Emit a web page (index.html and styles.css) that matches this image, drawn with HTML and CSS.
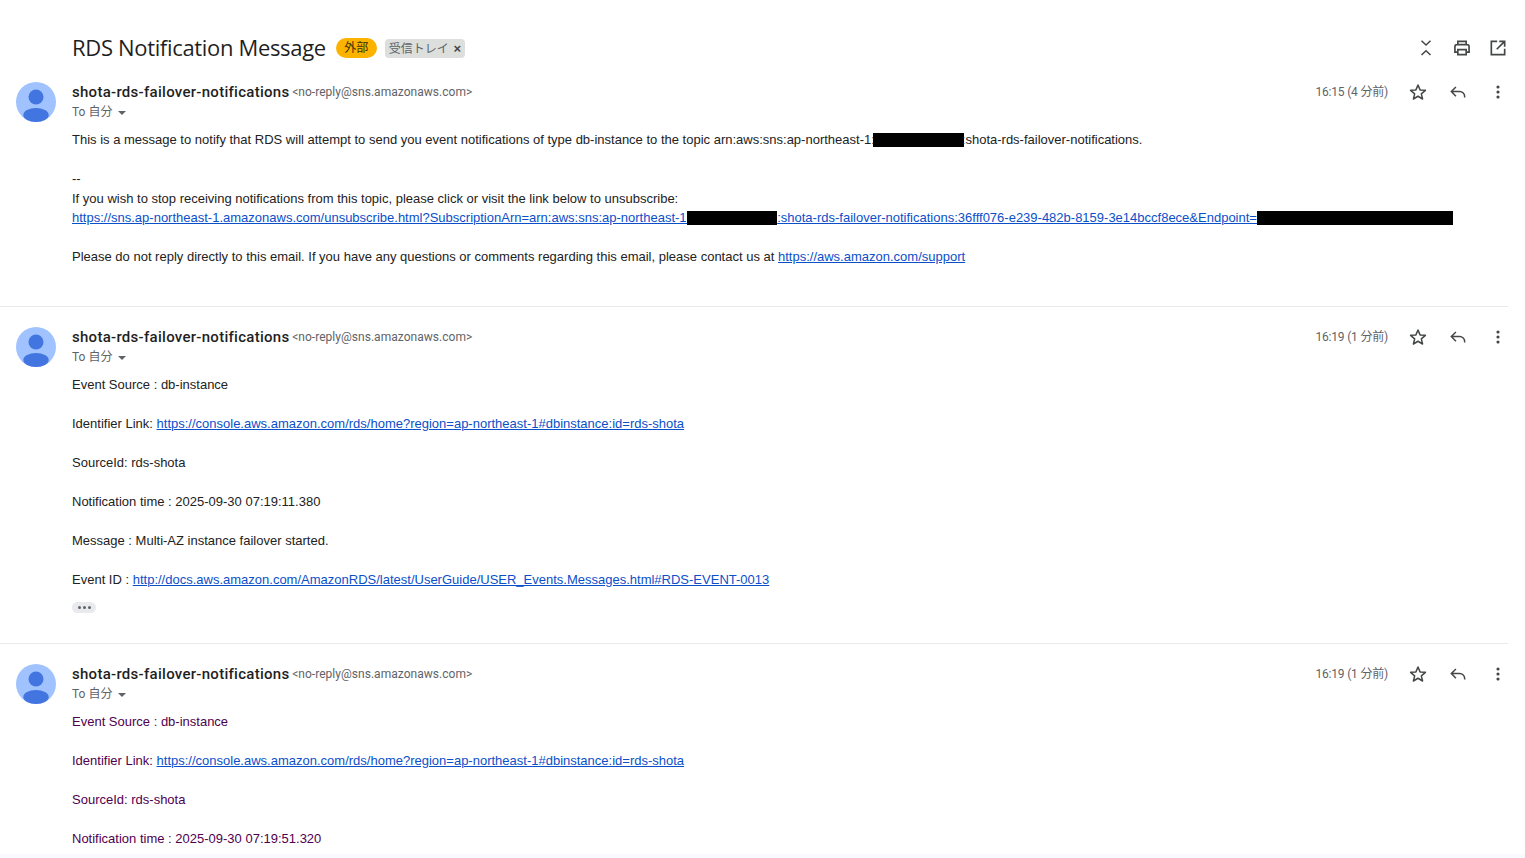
FILE: index.html
```html
<!DOCTYPE html>
<html lang="en">
<head>
  <meta charset="UTF-8">
  <meta name="viewport" content="width=device-width, initial-scale=1.0">
  <title>RDS Notification Message</title>
  <link rel="stylesheet" href="styles.css">
</head>
<body>
<svg class="icon-defs" width="0" height="0">
  <symbol id="i-avatar" viewBox="0 0 40 40">
    <circle cx="20" cy="20" r="20" fill="#a0c3ff"/>
    <circle cx="20" cy="15" r="7.500" fill="#4375e0"/>
    <ellipse cx="20" cy="33" rx="12.700" ry="7" fill="#4375e0"/>
  </symbol>
  <symbol id="i-star" viewBox="0 0 24 24">
    <path d="M12 3.600l2.500 5.900 6.400.5-4.900 4.200 1.500 6.200-5.500-3.300-5.500 3.300 1.500-6.200-4.900-4.200 6.400-.5z" fill="none" stroke="currentColor" stroke-width="1.800" stroke-linejoin="round"/>
  </symbol>
  <symbol id="i-reply" viewBox="0 0 24 24">
    <path d="M9.500 6L4 11.500 9.500 17M4.500 11.500H14a6 6 0 0 1 6 6v1" fill="none" stroke="currentColor" stroke-width="1.800"/>
  </symbol>
  <symbol id="i-more" viewBox="0 0 24 24">
    <circle cx="12" cy="6" r="1.900" fill="currentColor"/>
    <circle cx="12" cy="12" r="1.900" fill="currentColor"/>
    <circle cx="12" cy="18" r="1.900" fill="currentColor"/>
  </symbol>
</svg>

<div id="thread">
  <div class="subject-row">
    <h1 class="subject">RDS Notification Message</h1>
    <span class="tag-external">外部</span>
    <span class="tag-inbox">受信トレイ <span class="tag-x">×</span></span>
    <div class="subject-actions">
      <svg class="act" viewBox="0 0 24 24"><path d="M6.600 3.200L12 8.400l5.400-5.200M6.600 20.400L12 15.200l5.400 5.200" fill="none" stroke="currentColor" stroke-width="1.800"/></svg>
      <svg class="act" viewBox="0 0 24 24"><path d="M7 8V4h10v4M7 17H3.500v-6.500A2.500 2.500 0 0 1 6 8h12a2.500 2.500 0 0 1 2.500 2.500V17H17M7 14h10v6H7z" fill="none" stroke="currentColor" stroke-width="2"/></svg>
      <svg class="act" viewBox="0 0 24 24"><path d="M11 4H4v16h16v-7M13.500 4H20v6.500M20 4l-9.500 9.500" fill="none" stroke="currentColor" stroke-width="2"/></svg>
    </div>
  </div>

  <div class="message first">
    <svg class="avatar"><use href="#i-avatar"/></svg>
    <div class="message-main">
      <div class="message-head">
        <div>
          <div class="from"><strong>shota-rds-failover-notifications</strong> <span class="addr">&lt;no-reply@sns.amazonaws.com&gt;</span></div>
          <div class="to">To 自分 <span class="caret"></span></div>
        </div>
        <div class="head-right">
          <span class="time">16:15 (4 分前)</span>
          <svg class="act"><use href="#i-star"/></svg>
          <svg class="act"><use href="#i-reply"/></svg>
          <svg class="act"><use href="#i-more"/></svg>
        </div>
      </div>
      <div class="body">
        <p>This is a message to notify that RDS will attempt to send you event notifications of type db-instance to the topic arn:aws:sns:ap-northeast-1:<span class="redact r-91"></span>:shota-rds-failover-notifications.</p>
        <p class="blank"></p>
        <p>--</p>
        <p>If you wish to stop receiving notifications from this topic, please click or visit the link below to unsubscribe:</p>
        <p class="nowrap"><a href="#">https://sns.ap-northeast-1.amazonaws.com/unsubscribe.html?SubscriptionArn=arn:aws:sns:ap-northeast-1:<span class="redact r-90"></span>:shota-rds-failover-notifications:36fff076-e239-482b-8159-3e14bccf8ece&amp;Endpoint=<span class="redact r-196"></span></a></p>
        <p class="blank"></p>
        <p>Please do not reply directly to this email. If you have any questions or comments regarding this email, please contact us at <a href="#">https://aws.amazon.com/support</a></p>
      </div>
    </div>
  </div>

  <div class="message second">
    <svg class="avatar"><use href="#i-avatar"/></svg>
    <div class="message-main">
      <div class="message-head">
        <div>
          <div class="from"><strong>shota-rds-failover-notifications</strong> <span class="addr">&lt;no-reply@sns.amazonaws.com&gt;</span></div>
          <div class="to">To 自分 <span class="caret"></span></div>
        </div>
        <div class="head-right">
          <span class="time">16:19 (1 分前)</span>
          <svg class="act"><use href="#i-star"/></svg>
          <svg class="act"><use href="#i-reply"/></svg>
          <svg class="act"><use href="#i-more"/></svg>
        </div>
      </div>
      <div class="body">
        <p>Event Source : db-instance</p>
        <p class="blank"></p>
        <p>Identifier Link: <a href="#">https://console.aws.amazon.com/rds/home?region=ap-northeast-1#dbinstance:id=rds-shota</a></p>
        <p class="blank"></p>
        <p>SourceId: rds-shota</p>
        <p class="blank"></p>
        <p>Notification time : 2025-09-30 07:19:11.380</p>
        <p class="blank"></p>
        <p>Message : Multi-AZ instance failover started.</p>
        <p class="blank"></p>
        <p>Event ID : <a href="#">http://docs.aws.amazon.com/AmazonRDS/latest/UserGuide/USER_Events.Messages.html#RDS-EVENT-0013</a></p>
      </div>
      <div class="trimmed"><i></i><i></i><i></i></div>
    </div>
  </div>

  <div class="message last">
    <svg class="avatar"><use href="#i-avatar"/></svg>
    <div class="message-main">
      <div class="message-head">
        <div>
          <div class="from"><strong>shota-rds-failover-notifications</strong> <span class="addr">&lt;no-reply@sns.amazonaws.com&gt;</span></div>
          <div class="to">To 自分 <span class="caret"></span></div>
        </div>
        <div class="head-right">
          <span class="time">16:19 (1 分前)</span>
          <svg class="act"><use href="#i-star"/></svg>
          <svg class="act"><use href="#i-reply"/></svg>
          <svg class="act"><use href="#i-more"/></svg>
        </div>
      </div>
      <div class="body visited">
        <p>Event Source : db-instance</p>
        <p class="blank"></p>
        <p>Identifier Link: <a href="#">https://console.aws.amazon.com/rds/home?region=ap-northeast-1#dbinstance:id=rds-shota</a></p>
        <p class="blank"></p>
        <p>SourceId: rds-shota</p>
        <p class="blank"></p>
        <p>Notification time : 2025-09-30 07:19:51.320</p>
      </div>
    </div>
  </div>
</div>
<div class="bottom-strip"></div>
</body>
</html>
```

FILE: styles.css
```css
html, body {
  margin: 0;
  padding: 0;
  height: 858px;
  overflow: hidden;
  background-color: #ffffff;
  font-family: "Liberation Sans", Arial, "Noto Sans CJK JP", sans-serif;
  color: #222222;
}

.icon-defs {
  position: absolute;
}

#thread {
  height: 854px;
  overflow: hidden;
  padding-right: 17px;
}

.subject-row {
  display: flex;
  align-items: center;
  height: 48px;
  padding: 24px 0 10px 72px;
}

.subject {
  margin: 0 0 2px;
  font-family: "Open Sans", "Noto Sans CJK JP", sans-serif;
  font-size: 22px;
  font-weight: 400;
  color: #1f1f1f;
  letter-spacing: -0.33px;
}

.tag-external {
  margin-left: 10px;
  width: 41px;
  text-align: center;
  height: 20px;
  line-height: 18px;
  border-radius: 10px;
  background-color: #fbb300;
  font-size: 12px;
  font-family: "Noto Sans CJK JP", sans-serif;
  color: #3c2f00;
}

.tag-inbox {
  margin-left: 8px;
  padding: 0 4px;
  height: 19px;
  line-height: 17px;
  border-radius: 4px;
  background-color: #dddfdd;
  font-size: 12px;
  font-family: "Noto Sans CJK JP", sans-serif;
  color: #5f6368;
  white-space: nowrap;
}

.tag-x {
  margin-left: 2px;
  color: #444746;
  font-family: "Liberation Sans", sans-serif;
  font-size: 13px;
  font-weight: bold;
}

.subject-actions {
  margin-left: auto;
  display: flex;
  gap: 16px;
}

.act {
  width: 20px;
  height: 20px;
  color: #444746;
}

.message {
  display: flex;
  padding: 0 0 0 16px;
  border-bottom: 1px solid #e8eaed;
}

.message.first {
  height: 224px;
}

.message.second {
  margin-top: 20px;
  height: 316px;
}

.message.last {
  margin-top: 20px;
  border-bottom: 0;
}

.avatar {
  width: 40px;
  height: 40px;
  flex-shrink: 0;
}

.message-main {
  flex: 1;
  margin-left: 16px;
  min-width: 0;
}

.message-head {
  display: flex;
  justify-content: space-between;
  height: 48px;
}

.from {
  height: 20px;
  line-height: 20px;
  font-family: "Roboto", sans-serif;
  font-size: 15px;
}

.from strong {
  font-weight: 500;
  color: #1f1f1f;
  letter-spacing: 0.28px;
}

.addr {
  margin-left: -1px;
  font-size: 12px;
  letter-spacing: 0.03px;
  color: #5f6368;
  vertical-align: 1px;
}

.to {
  height: 20px;
  line-height: 20px;
  font-family: "Roboto", "Noto Sans CJK JP", sans-serif;
  font-size: 12px;
  color: #5f6368;
}

.caret {
  display: inline-block;
  width: 0;
  height: 0;
  margin-left: 3px;
  vertical-align: 1px;
  border-left: 4px solid transparent;
  border-right: 4px solid transparent;
  border-top: 4px solid #5f6368;
}

.head-right {
  display: flex;
  align-items: flex-start;
  gap: 20px;
}

.time {
  font-family: "Roboto", "Noto Sans CJK JP", sans-serif;
  font-size: 12px;
  line-height: 20px;
  letter-spacing: -0.2px;
  color: #5f6368;
}

.body {
  font-size: 13px;
  line-height: 19.5px;
  color: #222222;
}

.body p {
  margin: 0;
}

.body .blank {
  height: 19.5px;
}

.nowrap {
  white-space: nowrap;
}

.body a {
  color: #0b4fc9;
  text-decoration: underline;
}

.body.visited {
  color: #500050;
}

.redact {
  display: inline-block;
  height: 14px;
  vertical-align: -3px;
  background-color: #000000;
}

.r-91 {
  width: 91px;
  margin: 0 -2px;
}

.r-90 {
  width: 90px;
  margin-left: -3px;
}

.r-196 {
  width: 196px;
}

.trimmed {
  display: flex;
  align-items: center;
  justify-content: center;
  gap: 2px;
  width: 24px;
  height: 11px;
  margin-top: 12px;
  border-radius: 6px;
  background-color: #e8eaed;
}

.trimmed i {
  width: 3px;
  height: 3px;
  border-radius: 50%;
  background-color: #5f6368;
}

.bottom-strip {
  height: 4px;
  background-color: #f8fafd;
}
```
